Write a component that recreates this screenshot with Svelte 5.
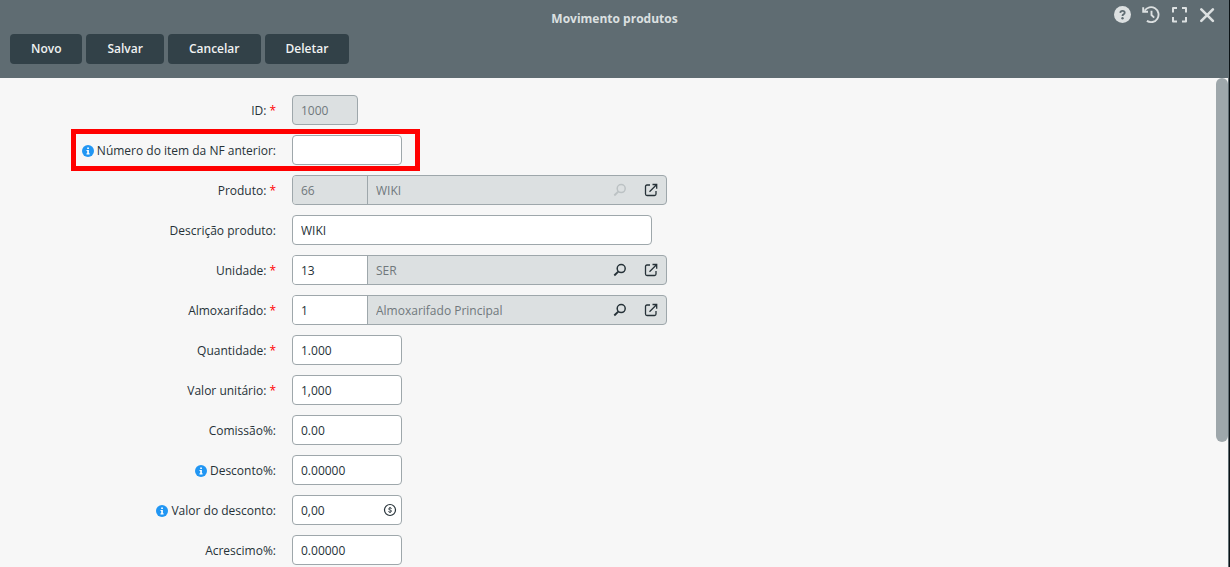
<script lang="ts">
  type Field = {
    id: string;
    label: string;
    value: string;
    required?: boolean;
    info?: boolean;
    size?: 'small' | 'medium' | 'large';
    readonly?: boolean;
    highlight?: boolean;
    money?: boolean;
    lookup?: string;
  };

  const actions = ['Novo', 'Salvar', 'Cancelar', 'Deletar'];

  let fields: Field[] = $state([
    { id: 'codigo', label: 'ID:', value: '1000', required: true, size: 'small', readonly: true },
    { id: 'item-nf', label: 'Número do item da NF anterior:', value: '', info: true, highlight: true },
    { id: 'produto', label: 'Produto:', value: '66', required: true, readonly: true, lookup: 'WIKI' },
    { id: 'descricao', label: 'Descrição produto:', value: 'WIKI', size: 'large' },
    { id: 'unidade', label: 'Unidade:', value: '13', required: true, lookup: 'SER' },
    { id: 'almoxarifado', label: 'Almoxarifado:', value: '1', required: true, lookup: 'Almoxarifado Principal' },
    { id: 'quantidade', label: 'Quantidade:', value: '1.000', required: true },
    { id: 'valor-unitario', label: 'Valor unitário:', value: '1,000', required: true },
    { id: 'comissao', label: 'Comissão%:', value: '0.00' },
    { id: 'desconto', label: 'Desconto%:', value: '0.00000', info: true },
    { id: 'valor-desconto', label: 'Valor do desconto:', value: '0,00', info: true, money: true },
    { id: 'acrescimo', label: 'Acrescimo%:', value: '0.00000' }
  ]);
</script>

<div class="window">
  <header>
    <div class="titlebar">
      <h1>Movimento produtos</h1>
      <div class="tools">
        <button type="button" aria-label="Ajuda">
          <svg width="18" height="18" viewBox="0 0 18 18">
            <circle cx="8.500" cy="8.500" r="8.500" fill="currentColor" />
            <path d="M6.300 6.900C6.400 5.400 7.300 4.900 8.500 4.900c1.400 0 2.200.8 2.200 1.800 0 1.700-2.200 1.500-2.200 3.200" fill="none" stroke="#5f6c72" stroke-width="1.800" />
            <circle cx="8.500" cy="12.200" r="1.200" fill="#5f6c72" />
          </svg>
        </button>
        <button type="button" aria-label="Histórico">
          <svg width="18" height="18" viewBox="0 0 18 18" fill="none" stroke="currentColor" stroke-width="1.900">
            <path d="M2.600 4.800A7.500 7.500 0 1 1 4.900 14.900" />
            <path d="M1.200 1.200v4.600h4.800" />
            <path d="M9.500 4.700v4.300l2.700 2.600" />
          </svg>
        </button>
        <button type="button" aria-label="Tela cheia">
          <svg width="18" height="18" viewBox="0 0 18 18" fill="none" stroke="currentColor" stroke-width="2" stroke-linejoin="round">
            <path d="M3 6.500v-4.500h4M12 2h4v4.500M16 11v4.500h-4M7 15.500h-4v-4.500" />
          </svg>
        </button>
        <button type="button" aria-label="Fechar">
          <svg width="18" height="18" viewBox="0 0 18 18" fill="none" stroke="currentColor" stroke-width="2.600" stroke-linecap="round">
            <path d="M3.300 3.300l11.600 11.600M14.900 3.300L3.300 14.900" />
          </svg>
        </button>
      </div>
    </div>
    <div class="actions">
      {#each actions as action}
        <button type="button">{action}</button>
      {/each}
    </div>
  </header>

  <div class="content">
    <form>
      {#each fields as field (field.id)}
        <div class="row" class:highlight={field.highlight}>
          <label for={field.id}>
            {#if field.info}
              <svg class="info" width="12" height="12" viewBox="0 0 12 12">
                <circle cx="6" cy="6" r="6" fill="#2196f3" />
                <path d="M5.200 2.400h1.700v1.500H5.200zM4.500 5h2.400v3.300h.7v1.100H4.500V8.300h.7V6h-.7z" fill="#fff" />
              </svg>
            {/if}
            <span>{field.label}</span>
            {#if field.required}<span class="required">*</span>{/if}
          </label>

          {#if field.lookup}
            <div class="control lookup">
              <input class="code" id={field.id} type="text" bind:value={field.value} disabled={field.readonly} />
              <input class="name" type="text" value={field.lookup} aria-label="{field.label} nome" disabled />
              <button type="button" aria-label="Pesquisar" disabled={field.readonly}>
                <svg width="14" height="14" viewBox="0 0 14 14" fill="none" stroke="currentColor">
                  <circle cx="8.200" cy="5.600" r="4" stroke-width="1.500" />
                  <path d="M5.200 8.600L1.300 12.500" stroke-width="1.900" />
                </svg>
              </button>
              <button type="button" aria-label="Abrir cadastro">
                <svg width="14" height="14" viewBox="0 0 14 14" fill="none" stroke="currentColor" stroke-width="1.300">
                  <path d="M6 2H3Q1.500 2 1.500 3.500v7.500Q1.500 12.500 3 12.500h7.500Q12 12.500 12 11V8" />
                  <path d="M8.500 1.500h4.200v4.200M12.500 1.700L5.500 8.700" />
                </svg>
              </button>
            </div>
          {:else}
            <div class="control {field.size ?? 'medium'}" class:readonly={field.readonly}>
              <input id={field.id} type="text" bind:value={field.value} disabled={field.readonly} />
              {#if field.money}
                <button class="money" type="button" aria-label="Calcular valor">
                  <svg width="14" height="14" viewBox="0 0 14 14" fill="none" stroke="currentColor">
                    <circle cx="7" cy="7" r="5.500" stroke-width="1.200" />
                    <path d="M8.600 5.500C8.200 4.900 5.600 4.700 5.600 6 5.600 7.300 8.500 6.700 8.500 8 8.500 9.400 5.900 9.200 5.400 8.500M7 4v1M7 9v1" stroke-width="1" />
                  </svg>
                </button>
              {/if}
            </div>
          {/if}
        </div>
      {/each}
    </form>
    <div class="scrollbar"><div class="thumb"></div></div>
  </div>
</div>

<style>
  :global(body) {
    margin: 0;
    background: #f7f7f7;
  }

  .window {
    display: flex;
    flex-direction: column;
    box-sizing: border-box;
    min-height: 100vh;
    border-right: 1px solid #0b1215;
    background: #f7f7f7;
    color: #263238;
    font-family: 'Open Sans', 'Noto Sans', sans-serif;
    font-size: 12px;
    line-height: 18px;
  }

  button {
    font: inherit;
    cursor: pointer;
  }

  header {
    height: 78px;
    background: #5f6c72;
  }

  .titlebar {
    display: grid;
    grid-template-columns: 1fr auto 1fr;
    height: 34px;
  }

  h1 {
    grid-column: 2;
    margin: 0;
    padding-top: 10px;
    color: #dce0e1;
    font-size: 12px;
    font-weight: 700;
    line-height: 18px;
  }

  .tools {
    display: flex;
    justify-content: flex-end;
    align-items: flex-start;
    gap: 10px;
    padding: 6px 13px 0 0;
  }

  .tools button {
    display: flex;
    padding: 0;
    border: 0;
    background: none;
    color: #dce0e1;
  }

  .actions {
    display: flex;
    gap: 4px;
    padding-left: 10px;
  }

  .actions button {
    height: 30px;
    padding: 0 21px;
    border: 0;
    border-radius: 4px;
    background: #324148;
    color: #f0f2f2;
    font-weight: 600;
  }

  .content {
    display: flex;
    flex: 1;
    border-right: 1px solid #5f6c72;
  }

  form {
    display: flex;
    flex: 1;
    flex-direction: column;
    gap: 10px;
    padding-top: 17px;
  }

  .row {
    position: relative;
    display: grid;
    grid-template-columns: 276px 1fr;
    column-gap: 16px;
    align-items: center;
    height: 30px;
  }

  .highlight::after {
    content: '';
    position: absolute;
    inset: -6px auto -6px 71px;
    box-sizing: border-box;
    width: 349px;
    border: 5px solid #f00;
    pointer-events: none;
  }

  label {
    display: flex;
    justify-content: flex-end;
    align-items: center;
    gap: 3px;
    padding-top: 2px;
  }

  .required {
    color: #f00;
  }

  .control {
    display: flex;
    box-sizing: border-box;
    height: 30px;
    overflow: hidden;
    border: 1px solid #9ea7ab;
    border-radius: 4px;
    background: #fff;
  }

  .small {
    width: 66px;
  }

  .medium {
    width: 110px;
  }

  .large {
    width: 360px;
  }

  .lookup {
    width: 375px;
    background: #dce0e1;
  }

  .readonly {
    background: #dce0e1;
  }

  input {
    flex: 1;
    box-sizing: border-box;
    min-width: 0;
    padding: 2px 8px 0;
    border: 0;
    outline: 0;
    background: transparent;
    color: #263238;
    font: inherit;
  }

  input:disabled {
    color: #70787c;
  }

  .code {
    flex: none;
    width: 75px;
    border-right: 1px solid #9ea7ab;
    background: #fff;
  }

  .code:disabled {
    background: #dce0e1;
  }

  .lookup button,
  .money {
    display: flex;
    flex: none;
    justify-content: center;
    align-items: center;
    width: 31px;
    padding: 0;
    border: 0;
    background: none;
    color: #263238;
  }

  .lookup button:disabled {
    color: #bcc2c4;
  }

  .money {
    width: 22px;
  }

  .scrollbar {
    width: 12px;
  }

  .thumb {
    height: 364px;
    border-radius: 6px;
    background: #9ea7ab;
  }
</style>
